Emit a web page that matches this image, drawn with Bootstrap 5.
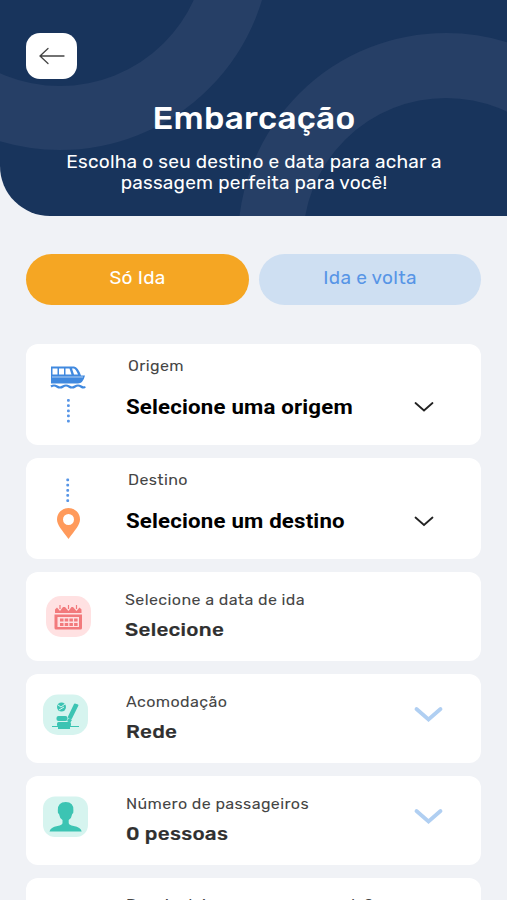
<!DOCTYPE html>
<html lang="pt-BR">
<head>
<meta charset="utf-8">
<meta name="viewport" content="width=device-width, initial-scale=1">
<title>Embarcação</title>
<link href="https://cdn.jsdelivr.net/npm/bootstrap@5.3.0/dist/css/bootstrap.min.css" rel="stylesheet">
<style>
body{font-family:Rubik,Roboto,"Liberation Sans",sans-serif;background:#f0f2f6;color:#303030;height:900px;overflow:hidden}
.hero{height:216px;background:#18345c;border-bottom-left-radius:50px;padding-top:33px}
.back{width:51px;height:46px;border-radius:14px;margin-left:26px}
.hero h1{font-size:31px;line-height:40px;font-weight:500;margin-top:20px;letter-spacing:.3px;padding-left:1px;transform:scaleX(1.075)}
.hero p{font-size:18px;line-height:21.5px;margin-top:12.500px;letter-spacing:.2px;padding-left:1px;transform:scaleX(1.06)}
.trip{padding:38px 26px 0;gap:10px}
.trip .btn{height:51px;font-size:18px;letter-spacing:.25px;padding:0 0 3px 1px;border:0}
.trip span{display:inline-block;transform:scaleX(1.06)}
.one-way,.one-way:hover{background:#f5a623;color:#fff}
.round,.round:hover{background:#cedff2;color:#5795e6}
.panels{padding:38.600px 26px 0;gap:13px}
.panel{border-radius:12px;flex:none}
.tall{height:101.300px}
.tall .words{padding:12px 0 0 16px}
.tall .caption{margin-left:2px}
.short{height:88.900px}
.short .words{padding:18px 0 0 16px}
.date .words{padding:18px 0 0 15px}
.last .words{padding-top:17.500px}
.glyph{width:84px;flex:none}
.glyph svg{display:block}
.caption,.choice,.value{transform-origin:left center;white-space:nowrap}
.caption{font-size:15px;line-height:20px;letter-spacing:.35px;color:#454545;transform:scaleX(1.07)}
.choice{font-size:20.500px;line-height:26px;font-weight:700;color:#000;font-family:Roboto,sans-serif;letter-spacing:.16px;margin-top:18.500px;transform:scaleX(1.085)}
.value{font-size:19px;line-height:24px;font-weight:500;letter-spacing:.25px;margin-top:8px;-webkit-text-stroke:.2px;transform:scaleX(1.085)}
.arrow{width:68px;flex:none}
</style>
<script src="https://cdn.jsdelivr.net/npm/bootstrap@5.3.0/dist/js/bootstrap.bundle.min.js"></script>
</head>
<body>
<header class="hero position-relative overflow-hidden text-white">
  <svg class="position-absolute top-0 start-0" width="507" height="216" fill="none" stroke="#263f66"><circle cx="60" cy="-61" r="179" stroke-width="64"/><circle cx="446" cy="241" r="175.500" stroke-width="65"/></svg>
  <div class="position-relative">
    <button class="back btn btn-light bg-white border-0 p-0 d-flex align-items-center justify-content-center" aria-label="Voltar"><svg width="28" height="20" fill="none" stroke="#444" stroke-width="1.3" stroke-linecap="round"><path d="M2 10H26M10 2.5L2 10l8 7.5"/></svg></button>
    <h1 class="text-center mb-0">Embarcação</h1>
    <p class="text-center mb-0">Escolha o seu destino e data para achar a<br>passagem perfeita para você!</p>
  </div>
</header>
<nav class="trip d-flex">
  <button class="btn rounded-pill one-way flex-fill w-50"><span>Só Ida</span></button>
  <button class="btn rounded-pill round flex-fill w-50"><span>Ida e volta</span></button>
</nav>
<main class="panels d-flex flex-column">
  <section class="panel tall bg-white d-flex">
    <div class="glyph"><svg width="84" height="101"><g fill="#4089df"><path d="M25 22.500H48Q52 23 55 31.500H59Q57 39.500 52 39.500H25z"/><path fill="#fff" d="M26.500 24.500h5v6h-5zM33 24.500h5v6h-5zM39.500 24.500h4l2 6h-6zM46 24.500h2q2 1 4 6h-4z"/></g><path stroke="#fff" stroke-width=".6" d="M26 33H57"/><path d="M25 42.500q3-2 6 0t6 0 6 0 6 0 6 0 4 0" fill="none" stroke="#4089df" stroke-width="2.200"/><g fill="#5795e6"><rect x="41" y="55" width="2.800" height="2.800" rx="1"/><rect x="41" y="60.200" width="2.800" height="2.800" rx="1"/><rect x="41" y="65.400" width="2.800" height="2.800" rx="1"/><rect x="41" y="70.500" width="2.800" height="2.800" rx="1"/><rect x="41" y="75.700" width="2.800" height="2.800" rx="1"/></g></svg></div>
    <div class="words flex-grow-1"><div class="caption">Origem</div><div class="choice">Selecione uma origem</div></div>
    <div class="arrow"><svg width="24" height="101" fill="none" stroke="#222" stroke-width="1.800" stroke-linecap="round"><path d="M2.500 59l8.500 7.500 8.500-7.500"/></svg></div>
  </section>
  <section class="panel tall bg-white d-flex">
    <div class="glyph"><svg width="84" height="101"><g fill="#5795e6"><rect x="40.300" y="20.500" width="2.800" height="2.800" rx="1"/><rect x="40.300" y="25.700" width="2.800" height="2.800" rx="1"/><rect x="40.300" y="30.900" width="2.800" height="2.800" rx="1"/><rect x="40.300" y="36" width="2.800" height="2.800" rx="1"/><rect x="40.300" y="41.200" width="2.800" height="2.800" rx="1"/></g><path fill="#ff9a5b" fill-rule="evenodd" d="M42.500 81C36 72 31 67 31 61.500a11.500 11.500 0 0 1 23 0C54 67 49 72 42.500 81zM42.500 56a5.500 5.500 0 1 0 0 11 5.500 5.500 0 0 0 0-11z"/></svg></div>
    <div class="words flex-grow-1"><div class="caption">Destino</div><div class="choice">Selecione um destino</div></div>
    <div class="arrow"><svg width="24" height="101" fill="none" stroke="#222" stroke-width="1.800" stroke-linecap="round"><path d="M2.500 59.500l8.500 7.500 8.500-7.500"/></svg></div>
  </section>
  <section class="panel short date bg-white d-flex">
    <div class="glyph"><svg width="84" height="88"><rect x="20" y="24" width="45" height="41" rx="15" fill="#ffe1e2"/><g fill="#f27a7c"><path d="M29 41V37.500l2-2 3 3.500 3-4h2l3.500 4 3-4h1.500l3.500 4 3-3.500 2 2V41z"/><path fill-rule="evenodd" d="M28.500 42.500H56V56q0 1.500-1.500 1.500H30q-1.500 0-1.500-1.500zM31.500 45v10H53V45z"/><path d="M34 46.500h3.500v3H34zM38.700 46.500h3.500v3h-3.500zM43.400 46.500h3.500v3h-3.500zM48.100 46.500h3.500v3h-3.500zM34 51h3.500v3H34zM38.700 51h3.500v3h-3.500zM43.400 51h3.500v3h-3.500zM48.100 51h3.500v3h-3.500z"/></g><path d="M34 33v4M42.500 33v4M50.500 33v4" stroke="#f27a7c" stroke-width="1.200"/></svg></div>
    <div class="words flex-grow-1"><div class="caption">Selecione a data de ida</div><div class="value">Selecione</div></div>
  </section>
  <section class="panel short bg-white d-flex">
    <div class="glyph"><svg width="84" height="88"><rect x="17" y="20.500" width="45" height="40.500" rx="15" fill="#d6f4ef"/><g fill="#3cc4b3"><circle cx="35.500" cy="33" r="4.500"/><path d="M49 29.500l3 1q.7.400.3 1.200L46 44.500q-.5 1-1.500.6l-2-1q-1-.5-.5-1.500L48 30q.4-.6 1-.5z"/><rect x="30.500" y="42" width="11" height="5" rx="2"/><rect x="31" y="48" width="14" height="4.500" rx="1.500"/><path d="M43 44l3 2-2 3-3-2zM32 53h12v2H32zM26 52h27v1H26z"/></g><path d="M32 31l3 2 4-3M33 36l5-3" stroke="#d6f4ef" fill="none"/></svg></div>
    <div class="words flex-grow-1"><div class="caption">Acomodação</div><div class="value">Rede</div></div>
    <div class="arrow"><svg width="32" height="88" fill="none" stroke="#b0cff2" stroke-width="3.800" stroke-linecap="round"><path d="M3.500 35l12 10.500 12-10.500"/></svg></div>
  </section>
  <section class="panel short bg-white d-flex">
    <div class="glyph"><svg width="84" height="88"><rect x="17" y="20.500" width="45" height="40.500" rx="12" fill="#d6f4ef"/><path fill="#3cc4b3" d="M23.500 55.500q1-4.500 8-5.500 5-1 5-3v-3q-3-2-3.500-6-1.500-1-1.200-3.500Q31.500 26 39.700 26t7.700 8.500q.3 2.500-1.200 3.500-.5 4-3.500 6v3q0 2 5 3 7 1 8 5.500z"/></svg></div>
    <div class="words flex-grow-1"><div class="caption">Número de passageiros</div><div class="value">0 pessoas</div></div>
    <div class="arrow"><svg width="32" height="88" fill="none" stroke="#b0cff2" stroke-width="3.800" stroke-linecap="round"><path d="M3.500 35l12 10.500 12-10.500"/></svg></div>
  </section>
  <section class="panel short last bg-white d-flex">
    <div class="glyph"></div>
    <div class="words flex-grow-1"><div class="caption">Deseja deixar uma encomenda?</div></div>
  </section>
</main>
</body>
</html>
